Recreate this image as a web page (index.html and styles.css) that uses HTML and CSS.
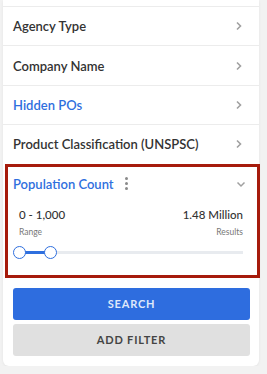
FILE: index.html
```html
<!DOCTYPE html>
<html lang="en">
<head>
    <meta charset="UTF-8">
    <meta name="viewport" content="width=device-width, initial-scale=1.0">
    <title>Filters</title>
    <link rel="stylesheet" href="styles.css">
</head>
<body>

<div class="card">
    <div class="row">
        <span class="label">Agency Type</span>
        <svg class="chev" width="8" height="10" viewBox="0 0 8 10"><path d="M2 1.5 L5.5 5 L2 8.5" fill="none" stroke="#a0a0a0" stroke-width="1.6"/></svg>
    </div>
    <div class="row">
        <span class="label">Company Name</span>
        <svg class="chev" width="8" height="10" viewBox="0 0 8 10"><path d="M2 1.5 L5.5 5 L2 8.5" fill="none" stroke="#a0a0a0" stroke-width="1.6"/></svg>
    </div>
    <div class="row">
        <span class="label active">Hidden POs</span>
        <svg class="chev" width="8" height="10" viewBox="0 0 8 10"><path d="M2 1.5 L5.5 5 L2 8.5" fill="none" stroke="#a0a0a0" stroke-width="1.6"/></svg>
    </div>
    <div class="row">
        <span class="label">Product Classification (UNSPSC)</span>
        <svg class="chev" width="8" height="10" viewBox="0 0 8 10"><path d="M2 1.5 L5.5 5 L2 8.5" fill="none" stroke="#a0a0a0" stroke-width="1.6"/></svg>
    </div>

    <div class="open-filter">
        <div class="open-head">
            <span class="label active">Population Count</span>
            <span class="kebab"><i></i><i></i><i></i></span>
            <svg class="chev-down" width="10" height="8" viewBox="0 0 10 8"><path d="M1.5 2.5 L5 6 L8.5 2.5" fill="none" stroke="#a0a0a0" stroke-width="1.5"/></svg>
        </div>
        <div class="stats">
            <div>
                <div class="value">0 - 1,000</div>
                <div class="caption">Range</div>
            </div>
            <div class="right">
                <div class="value">1.48 Million</div>
                <div class="caption">Results</div>
            </div>
        </div>
        <div class="slider">
            <div class="track"></div>
            <div class="fill" style="width: 31px"></div>
            <div class="thumb" style="left: 0px"></div>
            <div class="thumb" style="left: 31px"></div>
        </div>
    </div>

    <div class="actions">
        <button class="btn primary">SEARCH</button>
        <button class="btn secondary">ADD FILTER</button>
    </div>
</div>

</body>
</html>
```

FILE: styles.css
```css
body {
    margin: 0;
    background-color: #f2f2f2;
    font-family: Lato, "Open Sans", sans-serif;
    padding-left: 3px;
}
.card {
    width: 256px;
    background: white;
    padding-top: 6px;
    padding-bottom: 10px;
    border-radius: 0 0 6px 6px;
    box-shadow: 0px 1px 3px rgba(0, 0, 0, 0.06);
}
.row {
    display: flex;
    align-items: center;
    justify-content: space-between;
    height: 38.4px;
    padding: 0 16px 0 10px;
    border-top: 1px solid #ececec;
}
.label {
    font-size: 13px;
    font-weight: 600;
    color: #333;
}
.label.active {
    color: #2f6fde;
}
.open-filter {
    border: 3px solid #a61b0c;
    margin: 0 -1px 0 2px;
    padding: 0 14px 0 5px;
    height: 108px;
    position: relative;
}
.open-head {
    display: flex;
    align-items: center;
    height: 34px;
}
.kebab {
    display: flex;
    flex-direction: column;
    gap: 2px;
    margin-left: 11px;
}
.kebab i {
    display: block;
    width: 3px;
    height: 3px;
    border-radius: 50%;
    background: #8a8a8a;
}
.chev-down {
    margin-left: auto;
    margin-right: -3px;
}
.stats {
    display: flex;
    justify-content: space-between;
    padding-left: 6px;
    margin-top: 6px;
}
.value {
    font-size: 11.5px;
    font-weight: 500;
    color: #333;
    line-height: 16px;
}
.caption {
    font-size: 8.5px;
    color: #777;
    line-height: 14px;
    margin-top: 2px;
}
.right {
    text-align: right;
}
.slider {
    position: relative;
    height: 16px;
    margin-top: 6px;
}
.track {
    position: absolute;
    left: 6px;
    right: 0;
    top: 6px;
    height: 3px;
    background: #e8ebef;
}
.fill {
    position: absolute;
    left: 6px;
    top: 6px;
    height: 3px;
    background: #2f6fde;
}
.thumb {
    position: absolute;
    top: 1px;
    width: 13px;
    height: 13px;
    border: 1.5px solid #2f6fde;
    border-radius: 50%;
    background: white;
    box-sizing: border-box;
}
.actions {
    display: flex;
    flex-direction: column;
    gap: 4px;
    padding: 10px 9px 0 10px;
}
.btn {
    height: 32px;
    border: none;
    border-radius: 3px;
    font-family: Lato, sans-serif;
    font-size: 11px;
    font-weight: 700;
    letter-spacing: 0.8px;
}
.primary {
    background-color: #2e6ddf;
    color: #dfe8fa;
}
.secondary {
    background-color: #e0e0e0;
    color: #444;
}
```
